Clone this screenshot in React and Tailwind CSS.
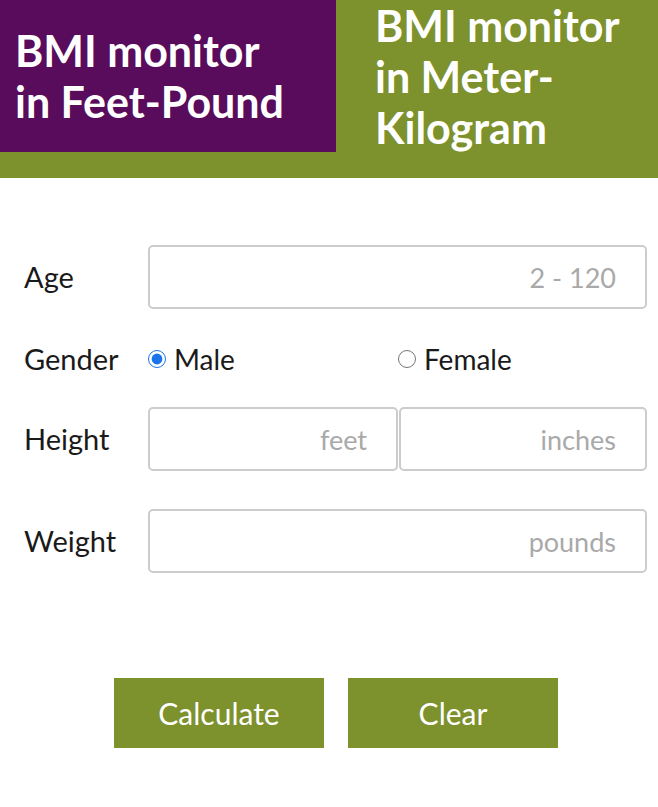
import React from "react";

const font = { fontFamily: "Lato, 'Liberation Sans', sans-serif" };

function Field({ placeholder, className = "" }) {
  return (
    <input
      type="text"
      placeholder={placeholder}
      className={
        "h-[64px] rounded-[5px] border-2 border-[#cccccc] bg-white pr-[29px] text-right text-[27px] text-[#222] placeholder:text-[#a9a9a9] outline-none " +
        className
      }
    />
  );
}

export default function App() {
  return (
    <div className="w-[658px] min-h-[807px] bg-white text-[#1a1a1a]" style={font}>
      <div className="flex h-[178px] items-start bg-[#7d912c]">
        <div className="flex h-[152px] w-[336px] flex-col justify-center bg-[#580c5b] pl-[15px] pb-[1px] text-[43px] font-bold leading-[51px] text-white">
          <div>BMI monitor</div>
          <div>in Feet-Pound</div>
        </div>
        <div className="pl-[39px] text-[43px] font-bold leading-[51px] text-white">
          <div>BMI monitor</div>
          <div>in Meter-</div>
          <div>Kilogram</div>
        </div>
      </div>

      <div className="pl-[24px] pr-[11px] pt-[67px]">
        <div className="flex items-center">
          <div className="w-[124px] text-[29px]">Age</div>
          <Field placeholder="2 - 120" className="w-[499px]" />
        </div>

        <div className="mt-[33px] flex h-[34px] items-center text-[28px]">
          <div className="w-[124px] text-[29px]">Gender</div>
          <label className="flex w-[250px] items-center">
            <input type="radio" name="g" defaultChecked className="m-0 h-[18px] w-[18px] accent-[#1a73e8]" />
            <span className="ml-[8px]">Male</span>
          </label>
          <label className="flex items-center">
            <input type="radio" name="g" className="m-0 h-[18px] w-[18px]" />
            <span className="ml-[8px]">Female</span>
          </label>
        </div>

        <div className="mt-[31px] flex items-center">
          <div className="w-[124px] text-[29px]">Height</div>
          <Field placeholder="feet" className="w-[250px]" />
          <Field placeholder="inches" className="ml-[1px] w-[248px]" />
        </div>

        <div className="mt-[38px] flex items-center">
          <div className="w-[124px] text-[29px]">Weight</div>
          <Field placeholder="pounds" className="w-[499px]" />
        </div>
      </div>

      <div className="mt-[105px] flex gap-[24px] pl-[114px]">
        <button className="h-[70px] w-[210px] bg-[#7d912c] text-[30px] text-white">Calculate</button>
        <button className="h-[70px] w-[210px] bg-[#7d912c] text-[30px] text-white">Clear</button>
      </div>
    </div>
  );
}
